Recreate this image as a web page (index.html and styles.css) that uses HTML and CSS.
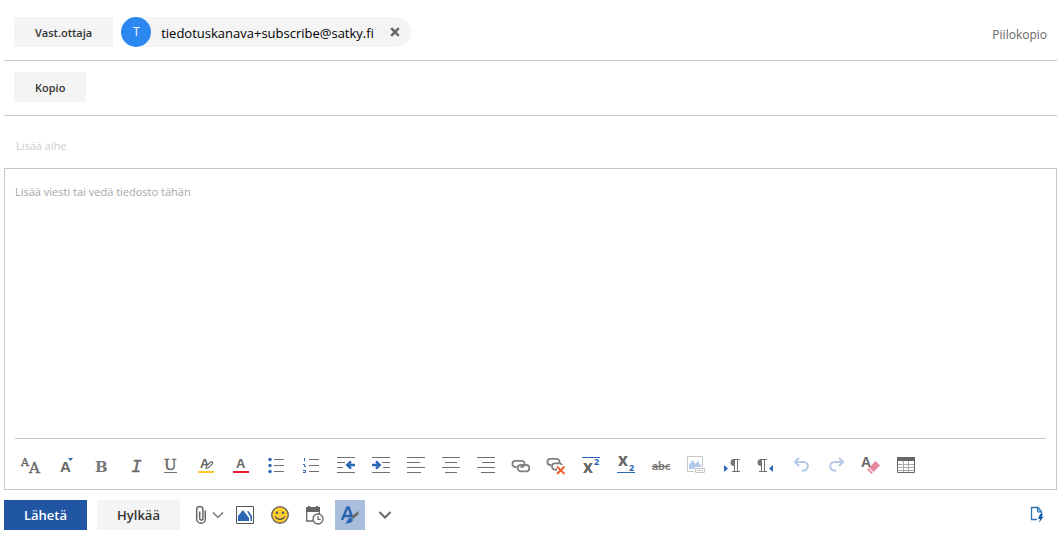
FILE: index.html
```html
<!DOCTYPE html>
<html lang="fi">
<head>
    <meta charset="UTF-8">
    <meta name="viewport" content="width=device-width, initial-scale=1.0">
    <title>Uusi viesti</title>
    <link rel="stylesheet" href="styles.css">
</head>
<body>
    <form class="compose">
        <div class="row row-to">
            <button type="button" class="field-button">Vast.ottaja</button>
            <div class="chip">
                <span class="avatar">T</span>
                <span class="address">tiedotuskanava+subscribe@satky.fi</span>
                <button type="button" class="chip-remove" aria-label="Poista">
                    <svg width="10" height="10" viewBox="0 0 10 10"><path d="M1.2 1.2l7.6 7.6M8.8 1.2l-7.6 7.6" stroke="#666" stroke-width="2.4"/></svg>
                </button>
            </div>
            <input type="text" class="recipient" aria-label="Vastaanottaja">
            <button type="button" class="bcc">Piilokopio</button>
        </div>

        <div class="row row-cc">
            <button type="button" class="field-button">Kopio</button>
            <input type="text" class="recipient" aria-label="Kopio">
        </div>

        <input type="text" class="subject" placeholder="Lisää aihe" aria-label="Aihe">

        <div class="editor">
            <textarea class="message" placeholder="Lisää viesti tai vedä tiedosto tähän" aria-label="Viesti"></textarea>

            <div class="toolbar">
                <button type="button" class="tool" aria-label="Fontti">
                    <svg viewBox="0 0 20 20"><text class="glyph slab" x="0" y="11" font-size="11">A</text><text class="glyph slab" x="8" y="18" font-size="15">A</text></svg>
                </button>
                <button type="button" class="tool" aria-label="Fonttikoko">
                    <svg viewBox="0 0 20 20"><text class="glyph sans" x="4" y="17" font-size="15">A</text><path class="blue" d="M12 3h5l-2.5 3z"/></svg>
                </button>
                <button type="button" class="tool" aria-label="Lihavointi">
                    <svg viewBox="0 0 20 20"><text class="glyph slab-bold" x="4" y="17" font-size="15">B</text></svg>
                </button>
                <button type="button" class="tool" aria-label="Kursivointi">
                    <svg viewBox="0 0 20 20"><text class="glyph mono-italic" x="5" y="17" font-size="18">I</text></svg>
                </button>
                <button type="button" class="tool" aria-label="Alleviivaus">
                    <svg viewBox="0 0 20 20"><text class="glyph slab" x="3" y="15" font-size="15">U</text><path class="line" d="M3 17.5h13"/></svg>
                </button>
                <button type="button" class="tool" aria-label="Korostus">
                    <svg viewBox="0 0 20 20"><text class="glyph sans" x="4" y="13" font-size="13">A</text><path d="M10 13.500l.5-2.500 4-4a1.200 1.200 0 0 1 1.800 1.800l-4 4z" fill="#fff" stroke="#666" stroke-width="1.200"/><path fill="#ffc925" d="M2 16h16v2H2z"/></svg>
                </button>
                <button type="button" class="tool" aria-label="Fontin väri">
                    <svg viewBox="0 0 20 20"><text class="glyph sans" x="5" y="13" font-size="13">A</text><path fill="#e81c2b" d="M2 16h16v2H2z"/></svg>
                </button>
                <button type="button" class="tool" aria-label="Luettelomerkit">
                    <svg viewBox="0 0 20 20"><path class="line" d="M8 4.500h10M8 10.500h10M8 16.500h10"/><g class="blue"><circle cx="4" cy="4.500" r="1.700"/><circle cx="4" cy="10.500" r="1.700"/><circle cx="4" cy="16.500" r="1.700"/></g></svg>
                </button>
                <button type="button" class="tool" aria-label="Numerointi">
                    <svg viewBox="0 0 20 20"><path class="line" d="M8 4.500h10M8 10.500h10M8 16.500h10"/><path class="blue-line" d="M2 9.500h1.500v2h1.500M3.500 3v3M2 15.500h2.500v2H2"/></svg>
                </button>
                <button type="button" class="tool" aria-label="Pienennä sisennystä">
                    <svg viewBox="0 0 20 20"><path class="line" d="M1 2.500h18M1 7.500h8M1 12.500h6M1 17.500h18"/><path class="arrow" d="M19 10h-7.500M15 6.300l-3.700 3.700 3.700 3.700"/></svg>
                </button>
                <button type="button" class="tool" aria-label="Suurenna sisennystä">
                    <svg viewBox="0 0 20 20"><path class="line" d="M1 2.500h18M11 7.500h8M12 12.500h7M1 17.500h18"/><path class="arrow" d="M1 10h7.500M5 6.300l3.700 3.700-3.700 3.700"/></svg>
                </button>
                <button type="button" class="tool" aria-label="Tasaa vasemmalle">
                    <svg viewBox="0 0 20 20"><path class="line" d="M1 2.500h18M1 7.500h13M1 12.500h18M1 17.500h14"/></svg>
                </button>
                <button type="button" class="tool" aria-label="Keskitä">
                    <svg viewBox="0 0 20 20"><path class="line" d="M1 2.500h18M4 7.500h12M1 12.500h18M4 17.500h12"/></svg>
                </button>
                <button type="button" class="tool" aria-label="Tasaa oikealle">
                    <svg viewBox="0 0 20 20"><path class="line" d="M1 2.500h18M6 7.500h13M1 12.500h18M5 17.500h14"/></svg>
                </button>
                <button type="button" class="tool" aria-label="Lisää linkki">
                    <svg viewBox="0 0 20 20"><g class="chain"><rect x="6.700" y="10" width="11.600" height="6.300" rx="3.100"/><path d="M5.500 12H4.500a2.900 2.900 0 0 1 0-6.200h6a2.900 2.900 0 0 1 2.500 4.700q-.5 1.700-3.500 1.700"/></g></svg>
                </button>
                <button type="button" class="tool" aria-label="Poista linkki">
                    <svg viewBox="0 0 20 20"><g class="chain"><path d="M5 10H4.500a2.900 2.900 0 0 1 0-6.100h6a2.900 2.900 0 0 1 2.500 4.600M11 14.500H9a3 3 0 0 1 0-6.200h5a2.800 2.800 0 0 1 2 1.700"/></g><path d="M11 11.500l7.500 7.500M18.500 11.500L11 19" stroke="#f15a29" stroke-width="1.800"/></svg>
                </button>
                <button type="button" class="tool" aria-label="Yläindeksi">
                    <svg viewBox="0 0 20 20"><text class="glyph bold" x="2" y="18" font-size="17">x</text><text class="glyph index" x="13" y="10" font-size="9">2</text><path class="blue-line" d="M1 2.500h18"/></svg>
                </button>
                <button type="button" class="tool" aria-label="Alaindeksi">
                    <svg viewBox="0 0 20 20"><text class="glyph bold" x="2" y="11" font-size="17">x</text><text class="glyph index" x="13" y="16" font-size="9">2</text><path class="blue-line" d="M1 17.500h18"/></svg>
                </button>
                <button type="button" class="tool" aria-label="Yliviivaus">
                    <svg viewBox="0 0 20 20"><text class="glyph abc" x="1" y="15" font-size="12">abc</text><path class="line" d="M1 11.500h18"/></svg>
                </button>
                <button type="button" class="tool" aria-label="Vaihtoehtoinen teksti" disabled>
                    <svg viewBox="0 0 20 20"><path d="M8 16.500H1.500v-15h15V12" fill="none" stroke="#c6c6c6"/><path fill="#b5cae8" d="M3 14V9.500L6.500 5l3 4L12 6l3 4.500V12H9v2z"/><path d="M9.500 13.500h9v4h-9zM11 15.500h6" fill="none" stroke="#c6c6c6"/></svg>
                </button>
                <button type="button" class="tool" aria-label="Vasemmalta oikealle">
                    <svg viewBox="0 0 20 20"><path class="blue" d="M3 10l4 3.500L3 17z"/><path class="grey" d="M13 4v7a3.500 3.500 0 0 1 0-7z"/><path class="line" d="M12 4.500h7M13.500 4v13M16.500 4v13M11 16.500h8"/></svg>
                </button>
                <button type="button" class="tool" aria-label="Oikealta vasemmalle">
                    <svg viewBox="0 0 20 20"><path class="blue" d="M17 10l-4 3.500 4 3.500z"/><path class="grey" d="M5 4v7a3.500 3.500 0 0 1 0-7z"/><path class="line" d="M4 4.500h7M5.500 4v13M8.500 4v13M3 16.500h8"/></svg>
                </button>
                <button type="button" class="tool" aria-label="Kumoa" disabled>
                    <svg viewBox="0 0 20 20"><path class="history" d="M8 3L4 7l4 4M4 7h8.500a4.300 4.300 0 0 1 0 8.600H11"/></svg>
                </button>
                <button type="button" class="tool" aria-label="Tee uudelleen" disabled>
                    <svg viewBox="0 0 20 20"><path class="history" d="M13 3l4 4-4 4M17 7H8.500a4.300 4.300 0 0 0 0 8.600H10"/></svg>
                </button>
                <button type="button" class="tool" aria-label="Poista muotoilu">
                    <svg viewBox="0 0 20 20"><text class="glyph sans" x="0" y="12" font-size="14">A</text><path fill="#e8889c" d="M14.500 6L19 10.500l-6.500 6.500L8 12.500zM7.300 13.200l4.500 4.500L10.500 19 6 14.500z"/></svg>
                </button>
                <button type="button" class="tool" aria-label="Lisää taulukko">
                    <svg viewBox="0 0 20 20"><path d="M2 9.500h16M2 12.500h16M2 15.500h16M7.500 6v12M12.500 6v12" stroke="#aaa"/><path d="M1.500 2.500h17v15h-17z" fill="none" stroke="#666"/><path fill="#666" d="M1 2h18v4H1z"/></svg>
                </button>
            </div>
        </div>

        <div class="actions">
            <button type="submit" class="send">Lähetä</button>
            <button type="button" class="discard">Hylkää</button>
            <div class="extras">
                <button type="button" class="extra attach" aria-label="Liitä">
                    <svg width="12" height="20" viewBox="0 0 12 20"><path d="M10.300 5.500v8.500a4.300 4.300 0 0 1-8.600 0V4.700a3.100 3.100 0 0 1 6.200 0V13.500a1.600 1.600 0 0 1-3.200 0V6.500" fill="none" stroke="#666" stroke-width="1.500"/></svg>
                    <svg width="12" height="8" viewBox="0 0 12 8"><path d="M1 1.500l5 5 5-5" fill="none" stroke="#666" stroke-width="1.200"/></svg>
                </button>
                <button type="button" class="extra" aria-label="Lisää kuva">
                    <svg width="20" height="20" viewBox="0 0 20 20"><path d="M1.500 1.500h17v17h-17z" fill="#fff" stroke="#555"/><path class="blue" d="M3 16v-5l5-6 6 8v3zM12 6.500l1.500-.5L17 11v5h-1.500v-4z"/></svg>
                </button>
                <button type="button" class="extra" aria-label="Lisää hymiö">
                    <svg width="20" height="20" viewBox="0 0 20 20"><circle cx="10" cy="10" r="8.300" fill="#ffcb2f" stroke="#70685a" stroke-width="1.400"/><circle cx="7" cy="7.800" r="1.200" fill="#555"/><circle cx="13" cy="7.800" r="1.200" fill="#555"/><path d="M5 11.500c2 3.700 8 3.700 10 0" fill="none" stroke="#555" stroke-width="1.400"/></svg>
                </button>
                <button type="button" class="extra" aria-label="Ehdota aikoja">
                    <svg width="20" height="20" viewBox="0 0 20 20"><path fill="#666" d="M1 2h2V1h2v1h6V1h2v1h2v5H1z"/><path d="M8 16H1.700V6M14.300 6v3" fill="none" stroke="#666" stroke-width="1.300"/><circle cx="13" cy="14" r="5" fill="#fff" stroke="#666" stroke-width="1.300"/><path d="M13 11v3.300h2.700" fill="none" stroke="#666" stroke-width="1.200"/></svg>
                </button>
                <button type="button" class="extra active" aria-label="Muotoiluasetukset" aria-pressed="true">
                    <svg width="20" height="20" viewBox="0 0 20 20"><path d="M2 15L7.300 2.500h1.400L12 12M4 11h7" fill="none" stroke="#2a63ad" stroke-width="2.400"/><path d="M18.500 6v3L13 14l-2-2z" fill="#666"/><path class="blue" d="M10.500 12.500l2.500 2c-.5 3-3.500 4-8 4 2-1 2.500-5.500 5.500-6z"/></svg>
                </button>
                <button type="button" class="extra" aria-label="Lisää">
                    <svg width="14" height="10" viewBox="0 0 14 10"><path d="M1.500 2L7 7.500 12.500 2" fill="none" stroke="#666" stroke-width="2"/></svg>
                </button>
            </div>
            <button type="button" class="extra addin" aria-label="Omat mallit">
                <svg width="14" height="18" viewBox="0 0 14 18"><path d="M7 13.500H1.500v-12H8l3.500 4V8" fill="none" stroke="#2e75b6" stroke-width="1.300"/><path d="M7.500 1.500V6h4z" fill="#9dc3e6" stroke="#2e75b6"/><path fill="#0f5ea8" d="M10 8h3l-1.500 2.500h2L9 17l1-4H8z"/></svg>
            </button>
        </div>
    </form>
</body>
</html>
```

FILE: styles.css
```css
body {
    font-family: "Open Sans", "Noto Sans", sans-serif;
    font-size: 11px;
    color: #333;
    background-color: #fff;
    margin: 0;
}

.compose {
    display: flex;
    flex-direction: column;
    box-sizing: border-box;
    min-height: 100vh;
    padding: 0 7px 25px 4px;
}

button, input, textarea {
    box-sizing: border-box;
    font-family: inherit;
    font-size: 11px;
    color: inherit;
    background: none;
    border: none;
    padding: 0;
    margin: 0;
}

button {
    cursor: pointer;
}

button:disabled {
    cursor: default;
}

/* Recipients */
.row {
    display: flex;
    align-items: center;
    gap: 8px;
    border-bottom: 1px solid #c6c6c6;
}

.row-to {
    padding: 17px 10px 13px;
}

.row-cc {
    padding: 11px 10px 13px;
}

.field-button {
    height: 30px;
    padding: 0 21px;
    font-weight: 600;
    background-color: #f4f4f4;
}

.chip {
    display: flex;
    align-items: center;
    height: 30px;
    padding-right: 11px;
    border-radius: 15px;
    background-color: #f4f4f4;
}

.avatar {
    width: 30px;
    line-height: 30px;
    margin-right: 10px;
    border-radius: 50%;
    font-size: 12px;
    text-align: center;
    color: #fff;
    background-color: #2b88f0;
}

.address {
    padding-top: 2px;
    font-size: 13px;
    color: #000;
}

.chip-remove {
    display: flex;
    margin-left: 16px;
}

.recipient {
    flex: 1;
    min-width: 0;
    height: 30px;
}

.bcc {
    padding-top: 4px;
    font-size: 12px;
    color: #666;
}

.subject {
    height: 52px;
    padding: 6px 12px 0;
}

.subject::placeholder {
    color: #ccc;
}

/* Message */
.editor {
    flex: 1;
    display: flex;
    flex-direction: column;
    padding: 0 10px;
    border: 1px solid #c6c6c6;
}

.message {
    flex: 1;
    padding-top: 14px;
    line-height: 18px;
    resize: none;
}

.message::placeholder {
    color: #a6a6a6;
}

.toolbar {
    display: flex;
    flex-wrap: wrap;
    gap: 15px;
    padding: 16px 0 14px 6px;
    border-top: 1px solid #c6c6c6;
}

.tool {
    width: 20px;
    height: 20px;
}

.tool svg {
    display: block;
    width: 20px;
    height: 20px;
    overflow: visible;
}

/* Icon parts */
.glyph {
    fill: #666;
}

.slab {
    font-family: "DejaVu Serif", serif;
    stroke: #666;
    stroke-width: 0.4;
}

.slab-bold {
    font-family: "DejaVu Serif", serif;
    font-weight: bold;
    fill: #777;
}

.mono-italic {
    font-family: "Liberation Mono", monospace;
    font-style: italic;
    fill: #666;
    stroke: #777;
    stroke-width: 0.4;
}

.sans {
    font-family: "Liberation Sans", sans-serif;
    font-weight: bold;
}

.bold {
    font-weight: bold;
}

.index {
    font-weight: bold;
    fill: #2a63b0;
}

.abc {
    font-family: Lato, sans-serif;
    font-weight: bold;
    fill: #777;
}

.line {
    fill: none;
    stroke: #707070;
}

.grey {
    fill: #777;
}

.blue {
    fill: #2a66b5;
}

.blue-line {
    fill: none;
    stroke: #2a66b5;
}

.arrow {
    fill: none;
    stroke: #2a66b5;
    stroke-width: 2.4;
}

.chain {
    fill: none;
    stroke: #808080;
    stroke-width: 1.8;
}

.history {
    fill: none;
    stroke: #b5cae8;
    stroke-width: 2.2;
}

/* Bottom buttons */
.actions {
    display: flex;
    gap: 10px;
    padding-top: 10px;
}

.send, .discard {
    height: 30px;
    padding: 0 20px;
    font-size: 13px;
    font-weight: 600;
}

.send {
    color: #fff;
    background-color: #2056a4;
}

.discard {
    background-color: #f4f4f4;
}

.extras {
    display: flex;
    gap: 5px;
}

.extra {
    display: flex;
    align-items: center;
    justify-content: center;
    width: 30px;
    height: 30px;
}

.attach {
    gap: 5px;
    width: 35px;
    padding-left: 4px;
}

.active {
    background-color: #a9bddd;
}

.addin {
    margin-left: auto;
    margin-right: 5px;
}
```
